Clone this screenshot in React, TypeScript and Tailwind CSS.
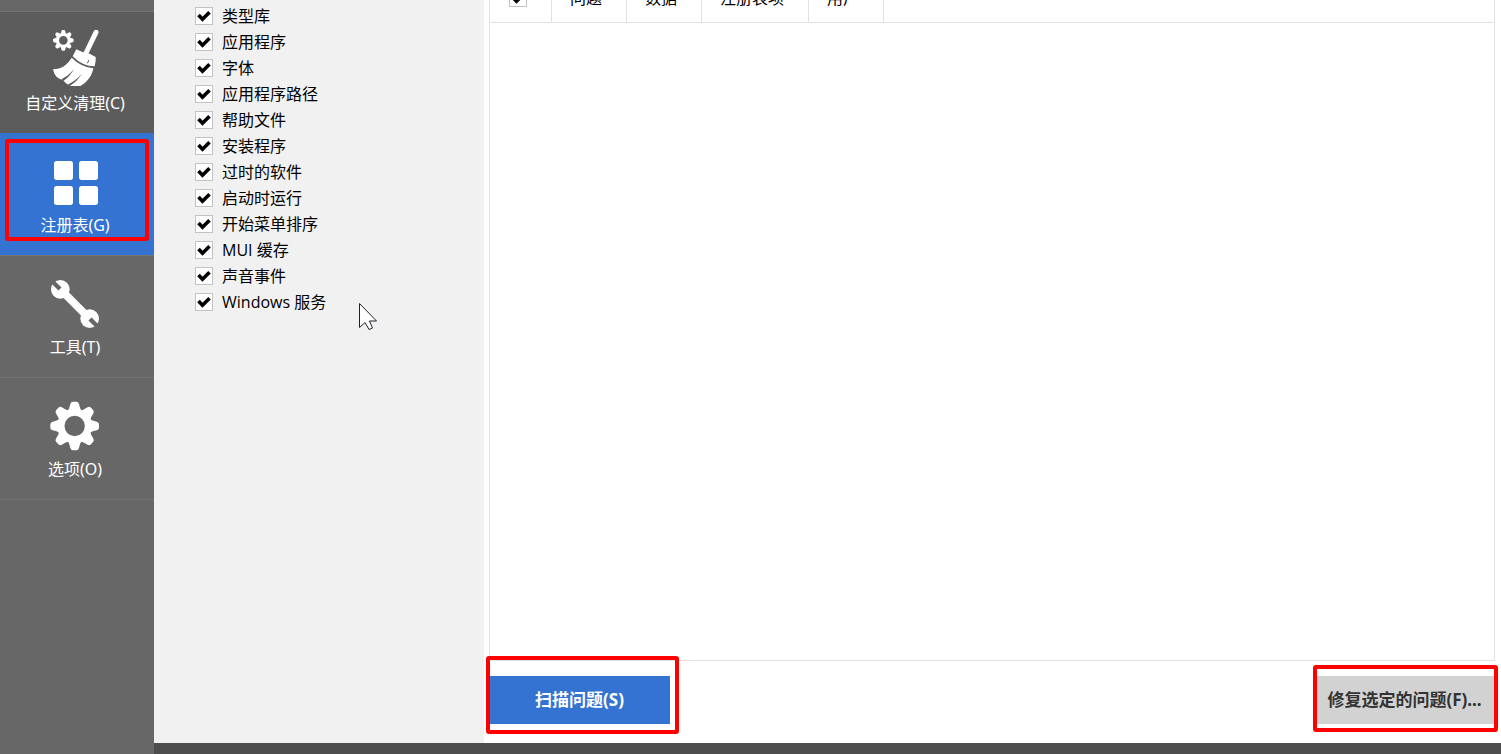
import { useState, type ReactNode } from 'react';
import clsx from 'clsx';

const registryItems = [
  '类型库',
  '应用程序',
  '字体',
  '应用程序路径',
  '帮助文件',
  '安装程序',
  '过时的软件',
  '启动时运行',
  '开始菜单排序',
  'MUI 缓存',
  '声音事件',
  'Windows 服务',
];

const columns = ['问题', '数据', '注册表项', '用户'];

function GearShape() {
  return (
    <g>
      <circle r="41" fill="none" stroke="white" strokeWidth="21" />
      {[0, 45, 90, 135, 180, 225, 270, 315].map((angle) => (
        <path
          key={angle}
          transform={`rotate(${angle})`}
          fill="white"
          d="M-20-46Q-16-52-13-66Q-11-73-5-73H5Q11-73 13-66Q16-52 20-46Z"
        />
      ))}
    </g>
  );
}

function NavIcon({ children }: { children: ReactNode }) {
  return (
    <svg viewBox="0 0 168 186" className="h-[62px] w-14" aria-hidden="true">
      {children}
    </svg>
  );
}

function BroomIcon() {
  return (
    <NavIcon>
      <g transform="translate(49 34) scale(.425)">
        <GearShape />
      </g>
      <path d="M147 10L117 72" stroke="white" strokeWidth="15" strokeLinecap="round" />
      <path d="M88 61L108 70L128 74L146 84L146 96L143 112Q106 112 77 82Z" fill="white" />
      <path
        d="M74 86Q102 114 139 118C136 137 124 158 100 171H72Q56 165 48 152Q24 150 18 121C44 120 61 108 74 86Z"
        fill="white"
      />
      <path d="M104 135Q88 154 62 167L68 171Q92 156 104 135ZM80 120Q68 138 44 150L50 155Q72 140 80 120Z" fill="#5c5c5c" />
      <path d="M121 103L126 93" fill="none" stroke="#5c5c5c" strokeWidth="3" />
    </NavIcon>
  );
}

function RegistryIcon() {
  return (
    <NavIcon>
      <g fill="white">
        <rect x="21" y="30" width="57" height="57" rx="8" />
        <rect x="96" y="30" width="57" height="57" rx="8" />
        <rect x="21" y="105" width="57" height="57" rx="8" />
        <rect x="96" y="105" width="57" height="57" rx="8" />
      </g>
    </NavIcon>
  );
}

function WrenchIcon() {
  return (
    <NavIcon>
      <path d="M40 49L128 137" stroke="white" strokeWidth="23" />
      <circle cx="40" cy="49" r="28" fill="white" />
      <circle cx="128" cy="137" r="28" fill="white" />
      <path d="M39 48L8 17M129 138L160 169" stroke="#676767" strokeWidth="13" />
    </NavIcon>
  );
}

function OptionsIcon() {
  return (
    <NavIcon>
      <g transform="translate(83 93)">
        <GearShape />
      </g>
    </NavIcon>
  );
}

function Tick({ id, label }: { id: string; label?: string }) {
  return (
    <span className="inline-grid size-[18px] shrink-0">
      <input
        id={id}
        type="checkbox"
        defaultChecked
        aria-label={label}
        className="peer col-start-1 row-start-1 size-[18px] appearance-none border border-[#c3c3c3] bg-white"
      />
      <svg
        viewBox="0 0 18 18"
        className="pointer-events-none invisible col-start-1 row-start-1 size-[18px] peer-checked:visible"
        aria-hidden="true"
      >
        <path d="M3.5 8L7.5 12.2L14.5 5.2" fill="none" stroke="black" strokeWidth="3.6" />
      </svg>
    </span>
  );
}

function Marker({ className }: { className: string }) {
  return <span className={clsx('pointer-events-none absolute rounded-[3px] border-4 border-[#ff0000]', className)} />;
}

const navItems = [
  { id: 'clean', label: '自定义清理(C)', icon: <BroomIcon /> },
  { id: 'registry', label: '注册表(G)', icon: <RegistryIcon /> },
  { id: 'tools', label: '工具(T)', icon: <WrenchIcon /> },
  { id: 'options', label: '选项(O)', icon: <OptionsIcon /> },
];

function Sidebar() {
  const [active, setActive] = useState('registry');

  return (
    <nav className="w-[154px] shrink-0 bg-[#676767] pt-[11px] font-['Noto_Sans','Noto_Sans_CJK_SC',sans-serif] text-white">
      {navItems.map((item) => (
        <button
          key={item.id}
          type="button"
          onClick={() => setActive(item.id)}
          className={clsx(
            'relative flex h-[122px] w-full flex-col items-center border-t pt-[17px] pr-1',
            active === item.id ? 'border-[#3473d1] bg-[#3473d1]' : 'border-[#757575]',
            item.id === 'clean' && 'bg-[#5c5c5c]',
          )}
        >
          {item.icon}
          <span className="text-base leading-6">{item.label}</span>
          {item.id === 'registry' && <Marker className="top-[5px] right-[5px] bottom-[14px] left-[5px]" />}
        </button>
      ))}
      <div className="border-t border-[#757575]" />
    </nav>
  );
}

export default function App() {
  return (
    <div className="flex h-screen overflow-hidden bg-white font-['Open_Sans','Noto_Sans_CJK_SC',sans-serif] text-base text-black">
      <Sidebar />

      <div className="flex min-w-0 flex-1 flex-col">
        <div className="flex min-h-0 flex-1">
          {/* Registry categories */}
          <aside className="relative w-[330px] shrink-0 bg-[#f1f1f1] pt-[3px] pl-[41px]">
            <ul>
              {registryItems.map((name, i) => (
                <li key={name} className="flex h-[26px] items-center gap-[9px]">
                  <Tick id={`item-${i}`} />
                  <label htmlFor={`item-${i}`} className="leading-6">
                    {name}
                  </label>
                </li>
              ))}
            </ul>
            <svg viewBox="0 0 18 28" className="absolute top-[303px] left-[205px] h-7 w-[18px]" aria-hidden="true">
              <path
                d="M.5.5V24.5L6 19.5L10 26.5L13.5 25L10.5 18H17.5Z"
                fill="white"
                stroke="#20202c"
                strokeWidth="1"
              />
            </svg>
          </aside>

          <main className="flex min-w-0 flex-1 flex-col pr-[6px] pl-[5px]">
            {/* Issues, scrolled a little past the top of the header */}
            <div className="min-h-0 flex-1 overflow-hidden border-x border-b border-[#e2e2e2]">
              <table className="-mt-[26px] w-full border-separate border-spacing-0 text-left">
                <thead>
                  <tr className="h-[49px]">
                    <th className="border-r border-b border-[#e2e2e2] pr-6 pl-[19px]">
                      <span className="flex">
                        <Tick id="select-all" label="全选" />
                      </span>
                    </th>
                    {columns.map((name) => (
                      <th
                        key={name}
                        className="border-r border-b border-[#e2e2e2] pr-6 pl-[18px] leading-6 font-normal whitespace-nowrap"
                      >
                        {name}
                      </th>
                    ))}
                    <td className="w-full border-b border-[#e2e2e2]" />
                  </tr>
                </thead>
              </table>
            </div>

            {/* Actions */}
            <div className="flex justify-between pt-[15px] pb-[19px] font-['Noto_Sans','Noto_Sans_CJK_SC',sans-serif] text-[17px] leading-6 font-bold">
              <div className="relative">
                <button type="button" className="h-12 w-[181px] bg-[#3473d1] text-white">
                  扫描问题(S)
                </button>
                <Marker className="-top-5 -right-[9px] -bottom-[10px] -left-[3px]" />
              </div>
              <div className="relative">
                <button type="button" className="h-12 w-[181px] bg-[#d2d2d2] text-[#333333]">
                  修复选定的问题(F)...
                </button>
                <Marker className="-top-[11px] -right-[3px] -bottom-2 -left-px" />
              </div>
            </div>
          </main>
        </div>
        <footer className="h-[11px] shrink-0 bg-[#4d4d4d]" />
      </div>
    </div>
  );
}
